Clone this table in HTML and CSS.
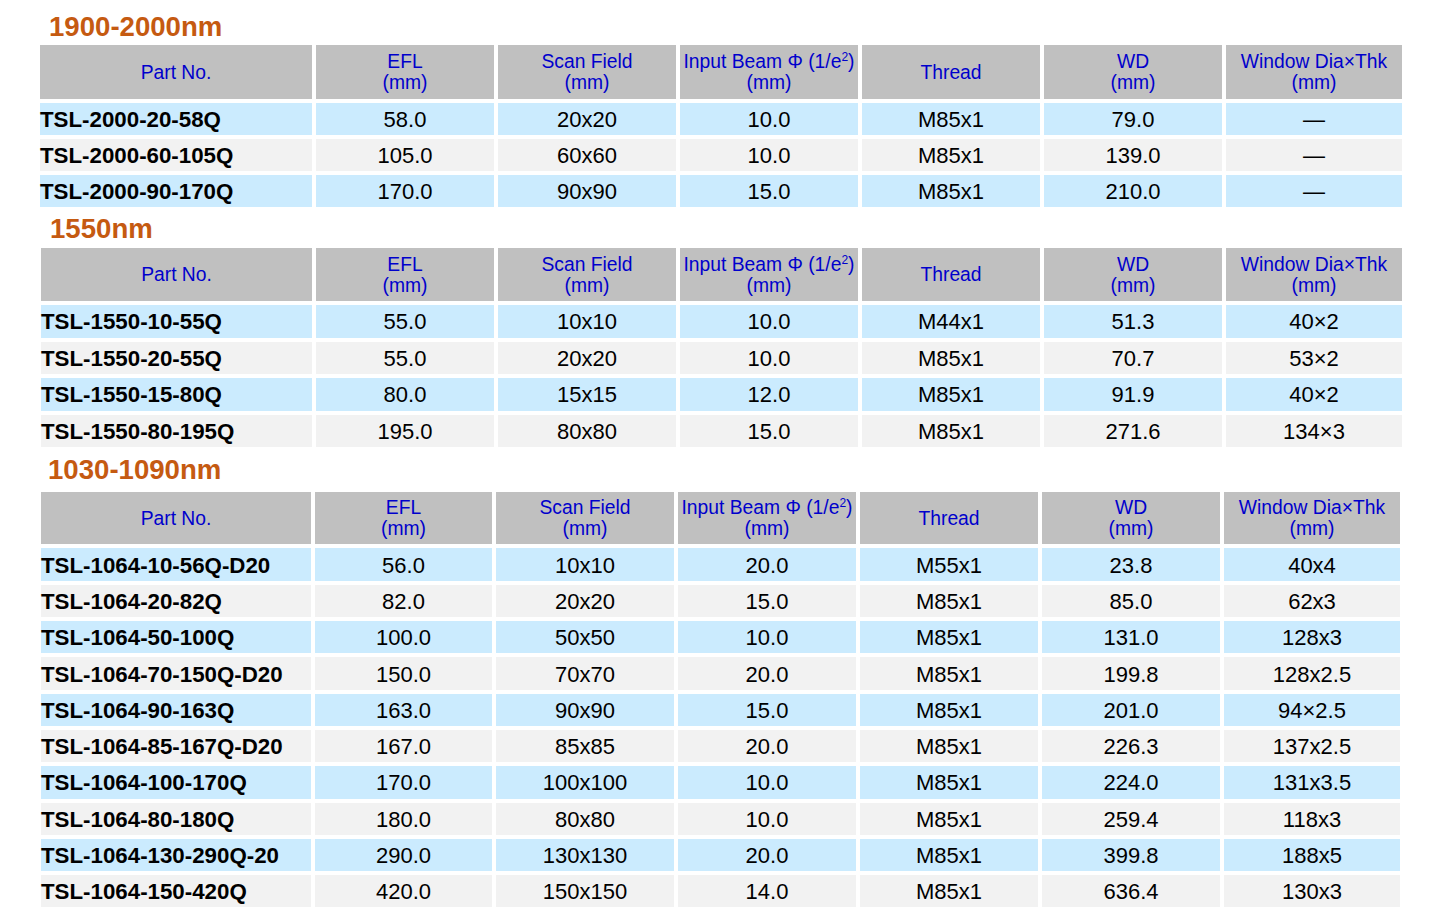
FILE: index.html
```html
<!DOCTYPE html>
<html>
<head>
<meta charset="utf-8">
<title>Scan Lens Table</title>
<link rel="stylesheet" href="styles.css">
</head>
<body>
<div class="page">

  <section class="sec sec1">
    <h2 class="title">1900-2000nm</h2>
    <div class="grid">
      <div class="h"><span>Part No.</span></div>
      <div class="h"><span>EFL<br>(mm)</span></div>
      <div class="h"><span>Scan Field<br>(mm)</span></div>
      <div class="h"><span>Input Beam Φ (1/e<sup>2</sup>)<br>(mm)</span></div>
      <div class="h"><span>Thread</span></div>
      <div class="h"><span>WD<br>(mm)</span></div>
      <div class="h"><span>Window Dia×Thk<br>(mm)</span></div>

      <div class="row b"><div class="c p">TSL-2000-20-58Q</div><div class="c">58.0</div><div class="c">20x20</div><div class="c">10.0</div><div class="c">M85x1</div><div class="c">79.0</div><div class="c">—</div></div>
      <div class="row g"><div class="c p">TSL-2000-60-105Q</div><div class="c">105.0</div><div class="c">60x60</div><div class="c">10.0</div><div class="c">M85x1</div><div class="c">139.0</div><div class="c">—</div></div>
      <div class="row b"><div class="c p">TSL-2000-90-170Q</div><div class="c">170.0</div><div class="c">90x90</div><div class="c">15.0</div><div class="c">M85x1</div><div class="c">210.0</div><div class="c">—</div></div>
    </div>
  </section>

  <section class="sec sec2">
    <h2 class="title">1550nm</h2>
    <div class="grid">
      <div class="h"><span>Part No.</span></div>
      <div class="h"><span>EFL<br>(mm)</span></div>
      <div class="h"><span>Scan Field<br>(mm)</span></div>
      <div class="h"><span>Input Beam Φ (1/e<sup>2</sup>)<br>(mm)</span></div>
      <div class="h"><span>Thread</span></div>
      <div class="h"><span>WD<br>(mm)</span></div>
      <div class="h"><span>Window Dia×Thk<br>(mm)</span></div>

      <div class="row b"><div class="c p">TSL-1550-10-55Q</div><div class="c">55.0</div><div class="c">10x10</div><div class="c">10.0</div><div class="c">M44x1</div><div class="c">51.3</div><div class="c">40×2</div></div>
      <div class="row g"><div class="c p">TSL-1550-20-55Q</div><div class="c">55.0</div><div class="c">20x20</div><div class="c">10.0</div><div class="c">M85x1</div><div class="c">70.7</div><div class="c">53×2</div></div>
      <div class="row b"><div class="c p">TSL-1550-15-80Q</div><div class="c">80.0</div><div class="c">15x15</div><div class="c">12.0</div><div class="c">M85x1</div><div class="c">91.9</div><div class="c">40×2</div></div>
      <div class="row g"><div class="c p">TSL-1550-80-195Q</div><div class="c">195.0</div><div class="c">80x80</div><div class="c">15.0</div><div class="c">M85x1</div><div class="c">271.6</div><div class="c">134×3</div></div>
    </div>
  </section>

  <section class="sec sec3">
    <h2 class="title">1030-1090nm</h2>
    <div class="grid">
      <div class="h"><span>Part No.</span></div>
      <div class="h"><span>EFL<br>(mm)</span></div>
      <div class="h"><span>Scan Field<br>(mm)</span></div>
      <div class="h"><span>Input Beam Φ (1/e<sup>2</sup>)<br>(mm)</span></div>
      <div class="h"><span>Thread</span></div>
      <div class="h"><span>WD<br>(mm)</span></div>
      <div class="h"><span>Window Dia×Thk<br>(mm)</span></div>

      <div class="row b"><div class="c p">TSL-1064-10-56Q-D20</div><div class="c">56.0</div><div class="c">10x10</div><div class="c">20.0</div><div class="c">M55x1</div><div class="c">23.8</div><div class="c">40x4</div></div>
      <div class="row g"><div class="c p">TSL-1064-20-82Q</div><div class="c">82.0</div><div class="c">20x20</div><div class="c">15.0</div><div class="c">M85x1</div><div class="c">85.0</div><div class="c">62x3</div></div>
      <div class="row b"><div class="c p">TSL-1064-50-100Q</div><div class="c">100.0</div><div class="c">50x50</div><div class="c">10.0</div><div class="c">M85x1</div><div class="c">131.0</div><div class="c">128x3</div></div>
      <div class="row g"><div class="c p">TSL-1064-70-150Q-D20</div><div class="c">150.0</div><div class="c">70x70</div><div class="c">20.0</div><div class="c">M85x1</div><div class="c">199.8</div><div class="c">128x2.5</div></div>
      <div class="row b"><div class="c p">TSL-1064-90-163Q</div><div class="c">163.0</div><div class="c">90x90</div><div class="c">15.0</div><div class="c">M85x1</div><div class="c">201.0</div><div class="c">94×2.5</div></div>
      <div class="row g"><div class="c p">TSL-1064-85-167Q-D20</div><div class="c">167.0</div><div class="c">85x85</div><div class="c">20.0</div><div class="c">M85x1</div><div class="c">226.3</div><div class="c">137x2.5</div></div>
      <div class="row b"><div class="c p">TSL-1064-100-170Q</div><div class="c">170.0</div><div class="c">100x100</div><div class="c">10.0</div><div class="c">M85x1</div><div class="c">224.0</div><div class="c">131x3.5</div></div>
      <div class="row g"><div class="c p">TSL-1064-80-180Q</div><div class="c">180.0</div><div class="c">80x80</div><div class="c">10.0</div><div class="c">M85x1</div><div class="c">259.4</div><div class="c">118x3</div></div>
      <div class="row b"><div class="c p">TSL-1064-130-290Q-20</div><div class="c">290.0</div><div class="c">130x130</div><div class="c">20.0</div><div class="c">M85x1</div><div class="c">399.8</div><div class="c">188x5</div></div>
      <div class="row g"><div class="c p">TSL-1064-150-420Q</div><div class="c">420.0</div><div class="c">150x150</div><div class="c">14.0</div><div class="c">M85x1</div><div class="c">636.4</div><div class="c">130x3</div></div>
    </div>
  </section>

</div>
</body>
</html>
```

FILE: styles.css
```css
html, body {
  margin: 0;
  padding: 0;
  background: #ffffff;
}

body {
  font-family: "Liberation Sans", Arial, sans-serif;
  color: #000000;
}

.page {
  display: flex;
  flex-direction: column;
}

.sec {
  display: flex;
  flex-direction: column;
}

.title {
  margin: 0;
  font-size: 27.6px;
  line-height: 30px;
  font-weight: bold;
  color: #c55a11;
}

.grid {
  display: grid;
  column-gap: 4px;
  row-gap: 4px;
}

.row {
  display: contents;
}

.h {
  background: #c0c0c0;
  color: #0000cc;
  font-size: 19.3px;
  line-height: 21px;
  text-align: center;
  white-space: nowrap;
  display: flex;
  align-items: center;
  justify-content: center;
}

.h span {
  display: block;
}

.h sup {
  font-size: 12px;
  line-height: 0;
  vertical-align: 7px;
}

.c {
  font-size: 22px;
  line-height: 24px;
  padding-top: 2px;
  box-sizing: border-box;
  display: flex;
  align-items: center;
  justify-content: center;
  white-space: nowrap;
}

.c.p {
  font-weight: bold;
  font-size: 22.3px;
  justify-content: flex-start;
}

.row.b .c {
  background: #cbebfe;
}

.row.g .c {
  background: #f2f2f2;
}

/* section 1 */
.sec1 .title {
  padding: 11.5px 0 0 49px;
  margin-bottom: 3.5px;
}

.sec1 .grid {
  margin-left: 40px;
  grid-template-columns: 272px 178px 178px 178px 178px 178px 176px;
  grid-template-rows: 54px repeat(3, 32px);
}

/* section 2 */
.sec2 .title {
  padding: 0 0 0 50px;
  margin-top: 6.5px;
  margin-bottom: 4.5px;
}

.sec2 .grid {
  margin-left: 41px;
  grid-template-columns: 271px 178px 178px 178px 178px 178px 176px;
  grid-template-rows: 53px repeat(4, 32.5px);
}

/* section 3 */
.sec3 .title {
  padding: 0 0 0 48px;
  margin-top: 7.7px;
  margin-bottom: 7.3px;
}

.sec3 .grid {
  margin-left: 41px;
  grid-template-columns: 270px 177px 178px 178px 178px 178px 176px;
  grid-template-rows: 52.5px repeat(10, 32.3px);
}
```
